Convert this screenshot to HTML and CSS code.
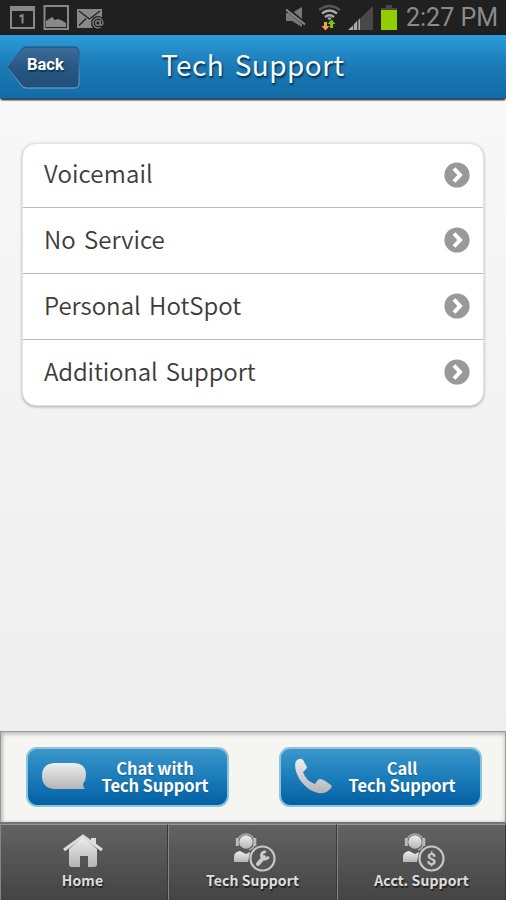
FILE: index.html
```html
<!DOCTYPE html>
<html lang="en">
<head>
<meta charset="utf-8">
<title>Tech Support</title>
<link rel="stylesheet" href="styles.css">
</head>
<body>
<div class="status">
  <svg class="status-left" width="110" height="35" viewBox="0 0 110 35">
    <path d="M10 6h25v23H10zM12 11v16h21V11z" fill="#888" fill-rule="evenodd"/>
    <path d="M19.500 16.500l3-1.500v8.500" fill="none" stroke="#888" stroke-width="2"/>
    <path d="M43.500 5h25.500v25H43.500zM45.500 7v21h21.500V7z" fill="#888" fill-rule="evenodd"/>
    <path d="M46 27v-6l6-4 3 3 3-1 3 1 5 3v4z" fill="#888"/>
    <path d="M77 9h25v19H77z" fill="#888"/>
    <path d="M79 11l10.500 8L100 11M79 25.500l7-7" fill="none" stroke="#202020" stroke-width="1.300"/>
    <circle cx="98" cy="23" r="7" fill="#202020"/>
    <circle cx="98" cy="23" r="2.300" fill="none" stroke="#888" stroke-width="1.300"/>
    <path d="M100.300 20.500v3.500c0 1.800 2.700 1.500 2.700-1a5 5 0 1 0-2.500 4.300" fill="none" stroke="#888" stroke-width="1.200"/>
  </svg>
  <svg class="status-right" width="120" height="35" viewBox="280 0 120 35">
    <path d="M286 13h6l10-6v20l-10-6h-6z" fill="#777"/>
    <path d="M286.500 8.500l19 16" stroke="#202020" stroke-width="4"/>
    <path d="M286 9.500l19 15" stroke="#888" stroke-width="2.200"/>
    <g fill="none" stroke-width="2.300">
      <path d="M319 10q10.500-8 21 0" stroke="#555"/>
      <path d="M322 13.500q7.500-6 15 0M325 17q4.500-3.500 9 0" stroke="#aaa"/>
    </g>
    <path d="M327 17.500h5l-2.500 3z" fill="#aaa"/>
    <path d="M324 22h3v4h2.500l-4 4.500-4-4.500h2.500z" fill="#f7a044"/>
    <path d="M330 28h3v-4h2.500l-4-4.500-4 4.500h2.500z" fill="#79c80b"/>
    <path d="M373 6v24h-25z" fill="#484848"/>
    <path d="M348 30l5-4.500V30zM354 30v-6l3-3v9zM358.500 30V20l1.500-1.500V30z" fill="#aaa"/>
    <path d="M386 5h6v3h5v3h-16V8h5z" fill="#484848"/>
    <path d="M381 10h16v20h-16z" fill="#91ce00"/>
  </svg>
  <span class="time">2:27 PM</span>
</div>
<header class="header">
  <div class="back">
    <svg class="back-shape" width="74" height="43" viewBox="0 0 74 43">
      <defs><linearGradient id="bk" x2="0" y2="1"><stop stop-color="#3f6d99"/><stop offset=".5" stop-color="#275783"/><stop offset="1" stop-color="#224f79"/></linearGradient>
      <linearGradient id="be" x2="0" y2="1"><stop stop-color="#164b78"/><stop offset="1" stop-color="#75abd0"/></linearGradient></defs>
      <path d="M1 21L16 3q2-2 4-2h48q5 0 5 5v31q0 5-5 5H20q-2 0-4-2z" fill="url(#bk)" stroke="url(#be)"/>
    </svg>
    <span class="back-label">Back</span>
  </div>
  <h1 class="title">Tech Support</h1>
</header>
<main class="main">
  <ul class="list">
    <li class="row"><span class="r1">Voicemail</span><svg class="chev" viewBox="0 0 26 26"><circle cx="13" cy="13" r="12.600"/><path d="M10 6.500l6 6.500-6 6.500"/></svg></li>
    <li class="row"><span class="r2">No Service</span><svg class="chev" viewBox="0 0 26 26"><circle cx="13" cy="13" r="12.600"/><path d="M10 6.500l6 6.500-6 6.500"/></svg></li>
    <li class="row"><span class="r3">Personal HotSpot</span><svg class="chev" viewBox="0 0 26 26"><circle cx="13" cy="13" r="12.600"/><path d="M10 6.500l6 6.500-6 6.500"/></svg></li>
    <li class="row"><span class="r4">Additional Support</span><svg class="chev" viewBox="0 0 26 26"><circle cx="13" cy="13" r="12.600"/><path d="M10 6.500l6 6.500-6 6.500"/></svg></li>
  </ul>
</main>
<section class="actions">
  <div class="btn chat">
    <svg class="btn-icon" width="48" height="40" viewBox="0 0 48 40">
      <defs><linearGradient id="gr" x2="0" y2="1"><stop stop-color="#eee"/><stop offset="1" stop-color="#b5b5b8"/></linearGradient></defs>
      <path d="M13 6h19q13 0 13 12 0 5-3 9 0 3 2 5H13Q1 31 1 19 1 7 13 6z" fill="url(#gr)"/>
    </svg>
    <span class="btn-text"><span class="line">Chat with</span><span class="line">Tech Support</span></span>
  </div>
  <div class="btn call">
    <svg class="btn-icon" width="48" height="40" viewBox="0 0 48 40">
      <path d="M2 4Q6 0 9 3l4 7q0 2-4 5 3 9 12 12 3-5 5-5 2-1 11 6 2 2-2 5-4 4-11 3Q14 34 6 23-1 11 2 4z" fill="url(#gr)"/>
    </svg>
    <span class="btn-text"><span class="line">Call</span><span class="line">Tech Support</span></span>
  </div>
</section>
<nav class="tabs">
  <div class="tab home">
    <svg class="tab-icon" width="50" height="46" viewBox="0 0 50 46">
      <path d="M11 25L25 13l14 12v15q0 3-3 3h-6V32h-8v11h-8q-3 0-3-3z" fill="url(#gr)"/>
      <path d="M6 26L25 12l19 14" fill="none" stroke="#ddd" stroke-width="3"/>
      <path d="M33 14h5v9l-5-4z" fill="#ddd"/>
    </svg>
    <span class="tab-label">Home</span>
  </div>
  <div class="tab tech">
    <svg class="tab-icon" width="50" height="46" viewBox="0 0 50 46">
      <circle cx="18" cy="18" r="6.800" fill="url(#gr)"/>
      <path d="M9 19a9 9 0 1 1 18 0q-1 5-6 7" fill="none" stroke="#aaa" stroke-width="1.400"/>
      <path d="M9.300 14v8M26.800 14v8" stroke="#bbb" stroke-width="3"/>
      <path d="M6 38V33q0-5 6-6l6 3 4-2-2 10z" fill="url(#gr)"/>
      <circle cx="34.500" cy="34.500" r="12" fill="#575757" stroke="#c8c8c8" stroke-width="2.200"/>
      <path d="M30 40l6-7" stroke="#ccc" stroke-width="4" stroke-linecap="round"/>
      <path d="M38 28a3.600 3.600 0 1 0 2.500 4.500" fill="none" stroke="#ccc" stroke-width="2.800"/>
    </svg>
    <span class="tab-label">Tech Support</span>
  </div>
  <div class="tab acct">
    <svg class="tab-icon" width="50" height="46" viewBox="0 0 50 46">
      <circle cx="18" cy="18" r="6.800" fill="url(#gr)"/>
      <path d="M9 19a9 9 0 1 1 18 0q-1 5-6 7" fill="none" stroke="#aaa" stroke-width="1.400"/>
      <path d="M9.300 14v8M26.800 14v8" stroke="#bbb" stroke-width="3"/>
      <path d="M6 38V33q0-5 6-6l6 3 4-2-2 10z" fill="url(#gr)"/>
      <circle cx="34.500" cy="34.500" r="12" fill="#575757" stroke="#c8c8c8" stroke-width="2.200"/>
      <text class="dollar" x="34.500" y="40.500">$</text>
    </svg>
    <span class="tab-label">Acct. Support</span>
  </div>
</nav>
</body>
</html>
```
FILE: styles.css
```css
* { box-sizing: border-box; }
body {
  margin: 0;
  width: 506px;
  height: 900px;
  display: flex;
  flex-direction: column;
  overflow: hidden;
  font-family: "Noto Sans CJK SC", "Noto Sans", sans-serif;
  background: linear-gradient(#f8f8f8 100px, #eeeeee 730px);
}
.status {
  height: 35px;
  flex: none;
  display: flex;
  background: #202020;
  border-bottom: 1px solid #10151a;
}
.status-left { margin-right: 170px; flex: none; }
.status-right { flex: none; }
.time {
  margin-left: 6px;
  font: 25px/35px Roboto, sans-serif;
  color: #8b8b8b;
  white-space: nowrap;
}
.header {
  height: 65px;
  flex: none;
  display: flex;
  align-items: flex-start;
  background: linear-gradient(#2c9cdb, #1b7bb6 48%, #126ba7);
  border-bottom: 2px solid #344c5e;
  border-radius: 0 0 3px 3px;
  box-shadow: 0 1px 1px #999;
}
.back { display: grid; margin: 11px 0 0 6px; width: 74px; }
.back-shape, .back-label { grid-area: 1 / 1; }
.back-label {
  font: bold 16.5px/38px Roboto, sans-serif;
  color: #fff;
  padding-left: 21px;
  text-shadow: 1px 2px 1px #123452;
}
.title {
  margin: 0 0 0 81px;
  font-size: 28px;
  font-weight: 400;
  line-height: 59px;
  letter-spacing: 0.4px;
  word-spacing: 4px;
  color: #f5faff;
  white-space: nowrap;
  text-shadow: 1px 2px 2px #062b48;
}
.main { flex: 1; padding: 43px 22px 0; }
.list {
  list-style: none;
  margin: 0;
  padding: 0;
  width: 462px;
  background: #fff;
  border-radius: 14px;
  border: 1px solid #e3e3e3;
  box-shadow: 0 1px 3px #aaa;
}
.row {
  height: 66px;
  display: flex;
  justify-content: space-between;
  align-items: center;
  padding: 0 13px 1px 21px;
  font-size: 24px;
  font-weight: 350;
  line-height: 36px;
  word-spacing: 3px;
  color: #3b3b3b;
  border-bottom: 1px solid #b9b9b9;
  white-space: nowrap;
}
.row span { padding-bottom: 3px; }
.r1 { letter-spacing: 0.15px; }
.r4 { letter-spacing: -0.13px; }
.row:first-child { height: 64px; padding-bottom: 2px; }
.row:last-child { border-bottom: 0; height: 65px; }
.chev { width: 26px; height: 26px; }
.chev circle { fill: #999; }
.chev path { fill: none; stroke: #fff; stroke-width: 4; }
.actions {
  height: 91px;
  flex: none;
  display: flex;
  gap: 50px;
  padding: 15px 0 0 25px;
  background: #f5f5f1;
  border: solid #999;
  border-width: 1px 1px 0 1px;
  box-shadow: inset 0 2px 4px #bbb, inset 2px 0 3px #ccc;
}
.btn {
  width: 203px;
  height: 60px;
  display: flex;
  align-items: center;
  border: 2px solid #8dc4da;
  border-radius: 11px;
  background: linear-gradient(#3b97ca, #1b7dba 50%, #0360a4);
}
.btn-icon { flex: none; margin-left: 13px; }
.btn-text {
  width: 120px;
  margin-left: 6px;
  font-size: 16.5px;
  font-weight: 700;
  line-height: 17px;
  letter-spacing: -0.1px;
  text-align: center;
  color: #fff;
  white-space: nowrap;
  text-shadow: 0 1px 1px #1a5c8c;
}
.line { display: block; }
.call .btn-text { margin-left: 0; }
.tabs {
  height: 78px;
  flex: none;
  display: grid;
  grid-template-columns: 168px 169px 169px;
  border-top: 2px solid #747474;
  background: linear-gradient(#636363, #444);
}
.tab {
  display: flex;
  flex-direction: column;
  align-items: center;
  border-top: 1px solid #999;
  border-left: 1px solid #858585;
  border-right: 1px solid #383838;
}
.tab-icon { height: 46px; flex: none; overflow: visible; margin-top: -1px; }
.tab-label {
  font-size: 14px;
  font-weight: 700;
  line-height: 20px;
  letter-spacing: 0.1px;
  color: #ddd;
  white-space: nowrap;
  text-shadow: 1px 2px 1px #222;
}
.home .tab-label, .home .tab-icon { margin-right: 3px; }
.dollar { font: bold 17px Roboto, sans-serif; fill: #ccc; text-anchor: middle; }
```
